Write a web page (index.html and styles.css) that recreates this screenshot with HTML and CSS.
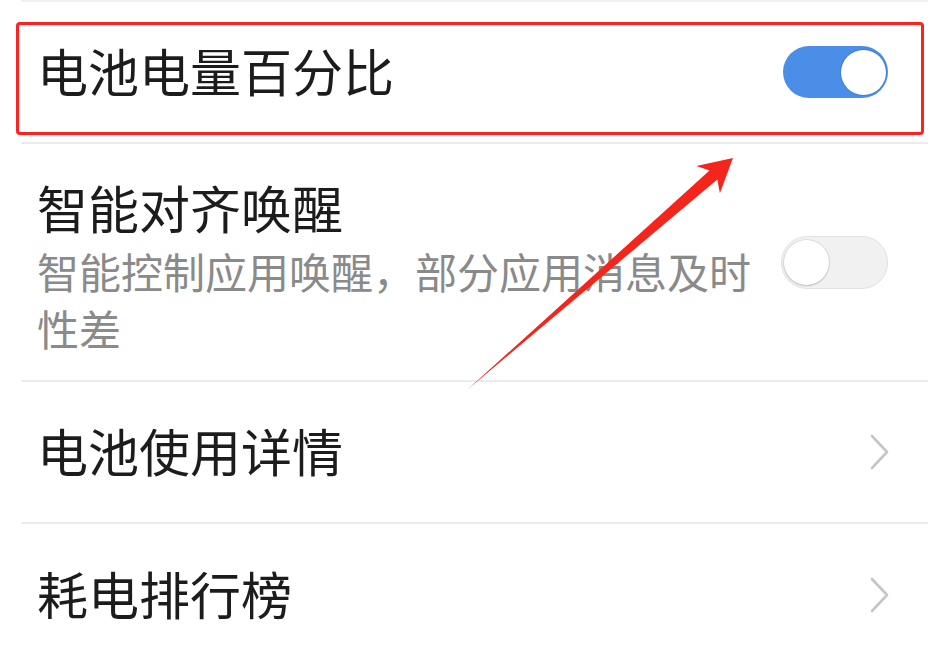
FILE: index.html
```html
<!DOCTYPE html>
<html lang="zh-CN">
<head>
<meta charset="utf-8">
<title>电池设置</title>
<link rel="stylesheet" href="styles.css">
</head>
<body>
<div class="screen">
  <ul class="list">
    <li class="row">
      <div class="text"><div class="title">电池电量百分比</div></div>
      <span class="switch switch-on"><span class="knob"></span></span>
    </li>
    <li class="row row-tall">
      <div class="text text-tall">
        <div class="title">智能对齐唤醒</div>
        <div class="subtitle">智能控制应用唤醒，部分应用消息及时性差</div>
      </div>
      <span class="switch switch-off"><span class="knob"></span></span>
    </li>
    <li class="row">
      <div class="text"><div class="title">电池使用详情</div></div>
      <svg class="chevron" width="24" height="36" viewBox="0 0 24 36"><polyline points="4,2 19,18 4,34" fill="none" stroke="#c6c6c6" stroke-width="2.6" stroke-linecap="round" stroke-linejoin="round"/></svg>
    </li>
    <li class="row">
      <div class="text"><div class="title">耗电排行榜</div></div>
      <svg class="chevron" width="24" height="36" viewBox="0 0 24 36"><polyline points="4,2 19,18 4,34" fill="none" stroke="#c6c6c6" stroke-width="2.6" stroke-linecap="round" stroke-linejoin="round"/></svg>
    </li>
  </ul>
  <div class="highlight"></div>
  <svg class="arrow" width="949" height="668" viewBox="0 0 949 668">
    <polygon points="733,158 719.9,193.3 717.3,179.6 467,390 709.5,170.6 696.3,166.1" fill="#f5251b"/>
  </svg>
</div>
</body>
</html>
```

FILE: styles.css
```css
html, body {
  margin: 0;
  padding: 0;
  background: #ffffff;
}

.screen {
  position: relative;
  width: 949px;
  height: 668px;
  overflow: hidden;
  background: #ffffff;
  font-family: "Noto Sans CJK SC", "Noto Sans", sans-serif;
}

.list {
  list-style: none;
  margin: 0 21px;
  padding: 0;
  border-top: 2px solid #f0f0f0;
}

.row {
  box-sizing: border-box;
  min-height: 142px;
  padding: 0 40px 0 16px;
  display: flex;
  align-items: center;
  justify-content: space-between;
  border-bottom: 2px solid #ebebeb;
}

.row:last-child {
  border-bottom: none;
}

.row-tall {
  min-height: 238px;
}

.text {
  margin-top: -4px;
}

.text-tall {
  margin-top: 0;
  padding-top: 8px;
}

.title {
  font-size: 51px;
  line-height: 60px;
  color: #1c1c1c;
  white-space: nowrap;
}

.subtitle {
  margin-top: 5px;
  width: 725px;
  font-size: 42px;
  line-height: 57px;
  color: #8a8a8a;
}

.switch {
  position: relative;
  flex: none;
  box-sizing: border-box;
  width: 105px;
  height: 52px;
  border-radius: 26px;
  display: flex;
  align-items: center;
}

.switch-on {
  background: #4b8ee7;
  justify-content: flex-end;
  padding: 0 2px;
}

.switch-on .knob {
  width: 45px;
  height: 45px;
  border-radius: 50%;
  background: #ffffff;
  box-shadow: 0 0 0 1px #3f7fd6;
}

.switch-off {
  width: 107px;
  height: 53px;
  background: #f1f1f1;
  border: 1px solid #e2e2e2;
  justify-content: flex-start;
  padding: 0 2px;
}

.switch-off .knob {
  width: 45px;
  height: 45px;
  border-radius: 50%;
  background: #ffffff;
  box-shadow: 0 1px 2px rgba(0, 0, 0, 0.18), 0 0 0 1px #e0e0e0;
}

.chevron {
  flex: none;
  margin-right: -4px;
}

.highlight {
  position: absolute;
  left: 16px;
  top: 22px;
  width: 908px;
  height: 113px;
  box-sizing: border-box;
  border: 3px solid #ff2121;
  border-radius: 4px;
}

.arrow {
  position: absolute;
  left: 0;
  top: 0;
  pointer-events: none;
}
```
